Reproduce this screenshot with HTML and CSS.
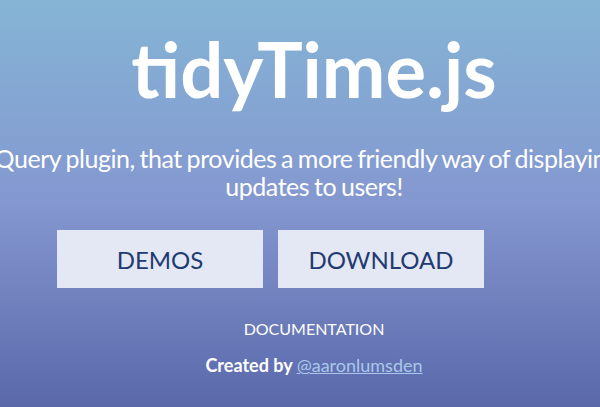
FILE: index.html
```html
<!DOCTYPE html>
<html lang="en">
<head>
<meta charset="utf-8">
<title>tidyTime.js</title>
<link rel="stylesheet" href="styles.css">
</head>
<body>
<main class="hero">
  <h1 class="title">tidyTime.js</h1>
  <p class="tagline">jQuery plugin, that provides a more friendly way of displaying updates to users!</p>
  <div class="actions">
    <a class="btn" href="#demos">DEMOS</a>
    <a class="btn" href="#download">DOWNLOAD</a>
  </div>
  <a class="docs" href="#docs">DOCUMENTATION</a>
  <p class="credit">Created by <a class="credit-link" href="#twitter">@aaronlumsden</a></p>
</main>
</body>
</html>
```

FILE: styles.css
```css
html, body {
  margin: 0;
  padding: 0;
  height: 100%;
}
body {
  background: linear-gradient(to bottom, #85b5d5 0%, #8497d0 50%, #5a68aa 100%);
  font-family: Lato, "Open Sans", sans-serif;
  color: #fff;
  overflow: hidden;
}
.hero {
  display: flex;
  flex-direction: column;
  align-items: center;
  padding-left: 28px;
  height: 407px;
  box-sizing: border-box;
}
.title {
  margin: 31px 0 0;
  font-size: 76px;
  line-height: 1;
  font-weight: 700;
}
.tagline {
  flex: none;
  width: 660px;
  margin: 37px 0 0;
  font-size: 25px;
  line-height: 28px;
  letter-spacing: -0.45px;
  word-spacing: -1.2px;
  text-indent: -20px;
  text-align: center;
}
.actions {
  align-self: flex-start;
  margin: 30px 0 0 29px;
  display: flex;
  gap: 15px;
}
.btn {
  width: 206px;
  height: 58px;
  box-sizing: border-box;
  display: flex;
  align-items: center;
  justify-content: center;
  background: #e4e8f4;
  color: #223a72;
  font-size: 24px;
  text-decoration: none;
}
.docs {
  margin-top: 31px;
  font-size: 16px;
  color: #fff;
  text-decoration: none;
}
.credit {
  margin: 16px 0 0;
  font-size: 18px;
  font-weight: 700;
}
.credit-link {
  color: #a9c8ea;
  font-weight: 400;
}
```
